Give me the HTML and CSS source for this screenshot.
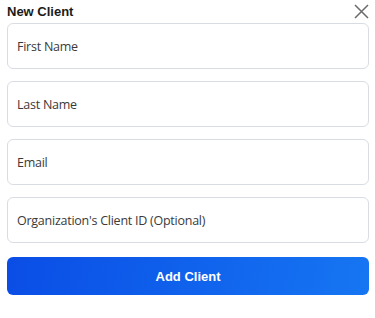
FILE: index.html
```html
<!DOCTYPE html>
<html>
<head>
<meta charset="utf-8">
<link rel="stylesheet" href="styles.css">
</head>
<body>
<div class="modal">
  <div class="header">
    <h2 class="title">New Client</h2>
    <button class="close" aria-label="Close">
      <svg width="15" height="15" viewBox="0 0 15 15"><path d="M1 1L14 14M14 1L1 14" stroke="#6b6b6b" stroke-width="1.5" fill="none"/></svg>
    </button>
  </div>
  <form class="form">
    <input class="field" type="text" placeholder="First Name">
    <input class="field" type="text" placeholder="Last Name">
    <input class="field" type="text" placeholder="Email">
    <input class="field" type="text" placeholder="Organization's Client ID (Optional)">
    <button class="submit" type="button">Add Client</button>
  </form>
</div>
</body>
</html>
```
FILE: styles.css
```css
html, body {
  margin: 0;
  padding: 0;
  background: #ffffff;
}
.modal {
  padding: 3px 6px 0 7px;
  font-family: "Liberation Sans", Arial, sans-serif;
}
.header {
  display: flex;
  justify-content: space-between;
  align-items: center;
  height: 17px;
}
.title {
  margin: 0;
  font-size: 13px;
  font-weight: 700;
  color: #1a1a1a;
}
.close {
  border: none;
  background: none;
  padding: 0;
  width: 15px;
  height: 15px;
  display: flex;
}
.form {
  display: flex;
  flex-direction: column;
  gap: 12px;
  margin-top: 3px;
}
.field {
  box-sizing: border-box;
  height: 46px;
  width: 100%;
  border: 1px solid #d9dce2;
  border-radius: 6px;
  padding: 0 9px;
  font-family: "Open Sans", "Noto Sans", sans-serif;
  font-size: 12.5px;
  letter-spacing: -0.25px;
  color: #333;
  outline: none;
}
.field::placeholder {
  color: #3a3a3a;
  opacity: 1;
}
.submit {
  margin-top: 2px;
  height: 38px;
  border: none;
  border-radius: 6px;
  background: linear-gradient(100deg, #0a4de6 0%, #1676f2 100%);
  color: #fff;
  font-family: "Liberation Sans", Arial, sans-serif;
  font-size: 13px;
  font-weight: 700;
}
```
